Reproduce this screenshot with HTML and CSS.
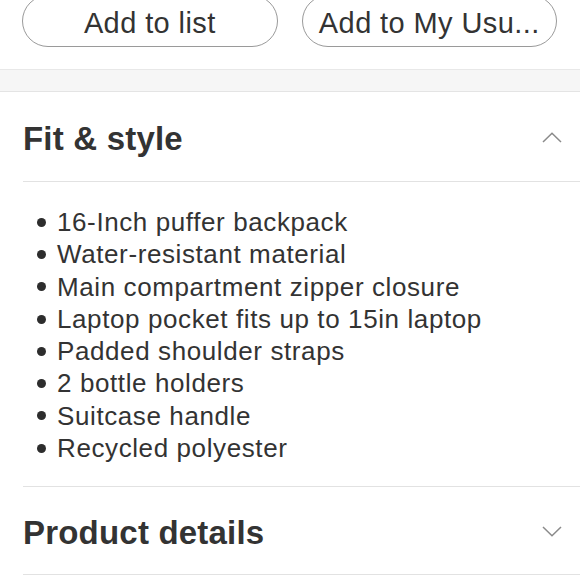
FILE: index.html
```html
<!DOCTYPE html>
<html lang="en">
<head>
<meta charset="utf-8">
<title>Product</title>
<link rel="stylesheet" href="styles.css">
</head>
<body>
<div class="actions">
  <button class="pill">Add to list</button>
  <button class="pill">Add to My Usu...</button>
</div>
<div class="band"></div>
<section class="accordion">
  <div class="acc-head">
    <h2 class="acc-title">Fit &amp; style</h2>
    <svg class="chev" width="20" height="11" viewBox="0 0 20 11"><polyline points="1,10 10,1.2 19,10" fill="none" stroke="#8a8a8a" stroke-width="1.5"/></svg>
  </div>
  <ul class="features">
    <li>16-Inch puffer backpack</li>
    <li>Water-resistant material</li>
    <li>Main compartment zipper closure</li>
    <li>Laptop pocket fits up to 15in laptop</li>
    <li>Padded shoulder straps</li>
    <li>2 bottle holders</li>
    <li>Suitcase handle</li>
    <li>Recycled polyester</li>
  </ul>
  <div class="acc-head">
    <h2 class="acc-title">Product details</h2>
    <svg class="chev" width="20" height="11" viewBox="0 0 20 11"><polyline points="1,1 10,9.8 19,1" fill="none" stroke="#8a8a8a" stroke-width="1.5"/></svg>
  </div>
</section>
</body>
</html>
```

FILE: styles.css
```css
html, body {
  margin: 0;
  padding: 0;
  background: #ffffff;
  font-family: "Liberation Sans", Arial, sans-serif;
  color: #333333;
  overflow: hidden;
}

.actions {
  display: flex;
  gap: 24px;
  padding: 0 23px 0 22px;
  margin-top: -5px;
}

.pill {
  flex: 1;
  height: 52px;
  border: 1px solid #9a9a9a;
  border-radius: 26px;
  background: #ffffff;
  font-family: "Liberation Sans", Arial, sans-serif;
  font-size: 29px;
  letter-spacing: 0.4px;
  color: #333333;
  padding: 4px 4px 0;
  white-space: nowrap;
  overflow: hidden;
}

.band {
  margin-top: 22px;
  height: 21px;
  background: #f6f6f6;
  border-top: 1px solid #e8e8e8;
  border-bottom: 1px solid #e4e4e4;
}

.accordion {
  margin-left: 23px;
}

.acc-head {
  box-sizing: border-box;
  display: flex;
  align-items: center;
  justify-content: space-between;
  height: 89px;
  padding: 4px 18px 0 0;
}

.acc-head + .features {
  border-top: 1px solid #e2e2e2;
}

.features + .acc-head {
  border-top: 1px solid #e2e2e2;
  border-bottom: 1px solid #e2e2e2;
}

.acc-title {
  margin: 0;
  font-size: 33px;
  font-weight: bold;
  letter-spacing: 0.2px;
  color: #333333;
}

.chev {
  display: block;
  margin-top: -3px;
}

.features {
  list-style: none;
  margin: 0;
  padding: 24px 0 22px;
}

.features li {
  display: flex;
  align-items: center;
  gap: 11px;
  font-size: 26px;
  letter-spacing: 0.6px;
  line-height: 32.3px;
  color: #333333;
}

.features li::before {
  content: "";
  width: 9px;
  height: 9px;
  margin-left: 14px;
  border-radius: 50%;
  background: #2d2d2d;
  flex: none;
}
```
